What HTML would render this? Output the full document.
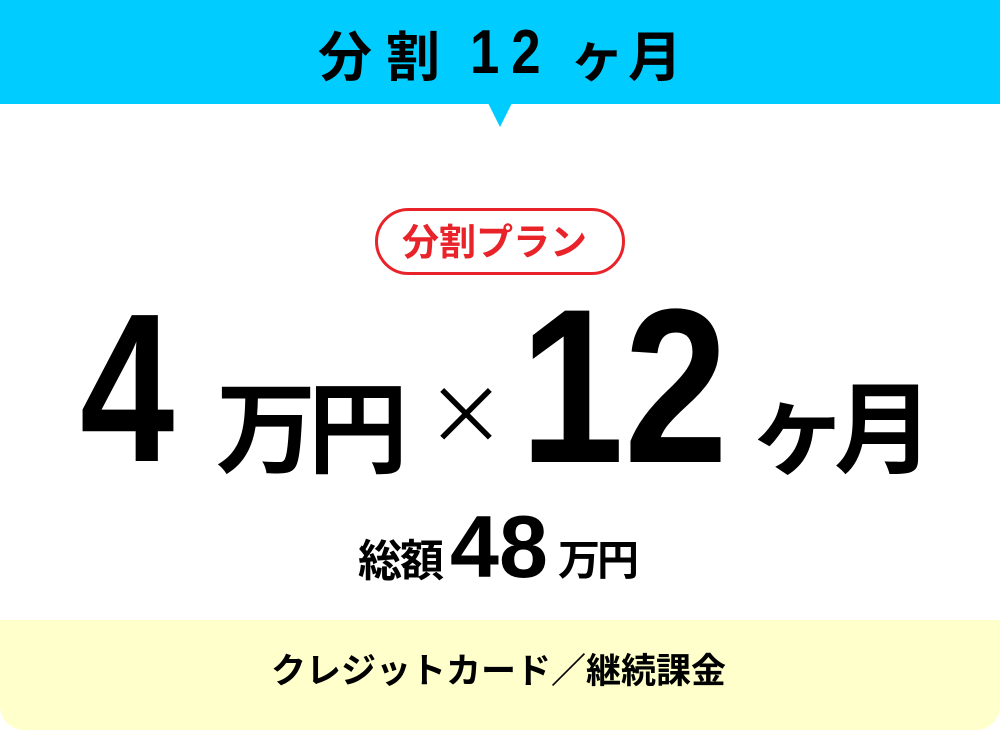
<!DOCTYPE html>
<html><head><meta charset="utf-8"><style>
html,body{margin:0;padding:0;background:#fff;}
body{width:1000px;height:730px;position:relative;overflow:hidden;font-family:"Liberation Sans","Noto Sans CJK JP",sans-serif;}
.a{position:absolute;line-height:1;white-space:nowrap;font-weight:bold;color:#000;}
.j{font-family:"Noto Sans CJK JP",sans-serif;}
.n{font-family:"Liberation Sans",sans-serif;transform-origin:0 0;}
</style></head><body>
<div style="position:absolute;left:0;top:0;width:1000px;height:104px;background:#00ccff;"></div>
<div style="position:absolute;left:488px;top:103px;width:0;height:0;border-left:12px solid transparent;border-right:12px solid transparent;border-top:24px solid #00ccff;"></div>
<div class="a j" style="left:318px;top:26px;font-size:54px;letter-spacing:14px;">分割</div>
<div class="a n" style="left:470px;top:22px;font-size:62px;transform:scaleX(0.85);letter-spacing:14px;">12</div>
<div class="a j" style="left:570px;top:26px;font-size:54px;letter-spacing:4px;">ヶ月</div>

<div style="position:absolute;left:375px;top:208px;width:244px;height:61px;border:3px solid #e8232a;border-radius:34px;"></div>
<div class="a j" style="left:402px;top:221px;font-size:37px;color:#e8232a;">分割プラン</div>

<div class="a n" style="left:80px;top:282px;font-size:212px;transform:scaleX(0.8);">4</div>
<div class="a j" style="left:216px;top:372px;font-size:100px;letter-spacing:-8px;">万円</div>
<div class="a j" style="left:426px;top:370px;font-size:80px;font-weight:normal;">×</div>
<div class="a n" style="left:520px;top:276px;font-size:220px;transform:scaleX(0.85);">12</div>
<div class="a j" style="left:748px;top:372px;font-size:100px;">ヶ</div>
<div class="a j" style="left:834px;top:372px;font-size:100px;">月</div>

<div class="a j" style="left:358px;top:535px;font-size:44px;letter-spacing:-2px;">総額</div>
<div class="a n" style="left:450px;top:503px;font-size:88px;transform:scaleX(1);">48</div>
<div class="a j" style="left:558px;top:537px;font-size:42px;letter-spacing:-3px;">万円</div>

<div style="position:absolute;left:0;top:620px;width:1000px;height:110px;background:#ffffcc;border-radius:0 0 24px 24px;"></div>
<div class="a j" style="left:271px;top:651px;font-size:35px;">クレジットカード／継続課金</div>
</body></html>
